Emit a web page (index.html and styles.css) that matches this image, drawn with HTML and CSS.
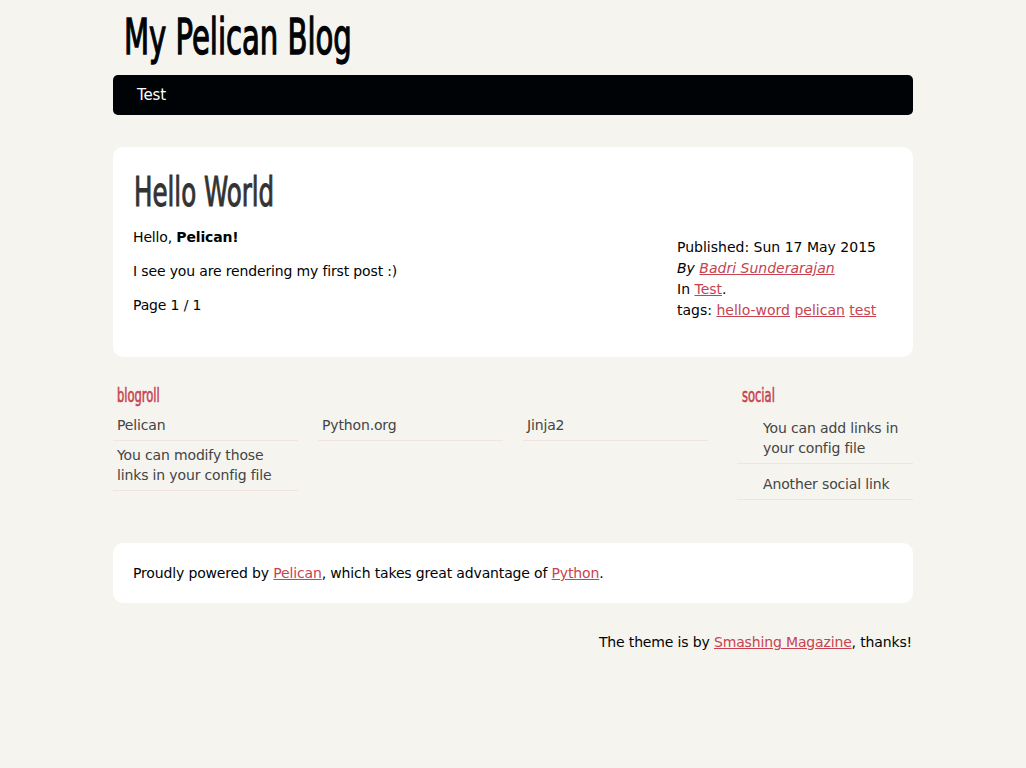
FILE: index.html
```html
<!DOCTYPE html>
<html lang="en">
<head>
<meta charset="utf-8">
<title>My Pelican Blog</title>
<link rel="stylesheet" href="styles.css">
</head>
<body>
<div class="page">
  <header class="banner">
    <h1 class="site-title">My Pelican Blog</h1>
    <nav class="menu"><a href="#">Test</a></nav>
  </header>

  <section class="card article">
    <h2 class="entry-title">Hello World</h2>
    <div class="entry">
      <div class="entry-content">
        <p>Hello, <strong>Pelican!</strong></p>
        <p>I see you are rendering my first post :)</p>
        <p>Page 1 / 1</p>
      </div>
      <footer class="post-info">
        <div>Published: Sun 17 May 2015</div>
        <div><em>By</em> <a href="#" class="au">Badri Sunderarajan</a></div>
        <div>In <a href="#">Test</a>.</div>
        <div>tags: <a href="#">hello-word</a> <a href="#">pelican</a> <a href="#">test</a></div>
      </footer>
    </div>
  </section>

  <section class="extras">
    <div class="blogroll">
      <h2 class="side-title">blogroll</h2>
      <ul class="roll">
        <li>Pelican</li>
        <li>Python.org</li>
        <li>Jinja2</li>
        <li>You can modify those links in your config file</li>
      </ul>
    </div>
    <div class="social">
      <h2 class="side-title">social</h2>
      <ul class="soc">
        <li>You can add links in your config file</li>
        <li>Another social link</li>
      </ul>
    </div>
  </section>

  <footer class="card contentinfo">
    Proudly powered by <a href="#">Pelican</a>, which takes great advantage of <a href="#">Python</a>.
  </footer>
  <p class="credits">The theme is by <a href="#">Smashing Magazine</a>, thanks!</p>
</div>
</body>
</html>
```
FILE: styles.css
```css
html, body {
  margin: 0;
  padding: 0;
}
body {
  background: #f5f4ef;
  color: #000305;
  font-family: "DejaVu Sans", sans-serif;
  font-size: 14px;
  line-height: 21px;
  letter-spacing: -0.15px;
}
a {
  color: #c74350;
}
.page {
  width: 800px;
  margin: 0 auto;
}
.banner {
  display: flex;
  flex-direction: column;
}
.site-title {
  margin: 0;
  height: 75px;
  padding-left: 11px;
  font-family: "DejaVu Sans Condensed", "DejaVu Sans", sans-serif;
  font-weight: normal;
  font-size: 49px;
  line-height: 75px;
  letter-spacing: 0;
  color: #000305;
  -webkit-text-stroke: 1.3px #000305;
  transform: scaleX(0.66);
  transform-origin: 11px 0;
}
.menu {
  height: 40px;
  background: #000305;
  border-radius: 5px;
  display: flex;
  align-items: center;
  padding-left: 24px;
}
.menu a {
  color: #fff;
  text-decoration: none;
  font-size: 15px;
  font-weight: normal;
}
.card {
  background: #fff;
  border-radius: 10px;
}
.article {
  margin-top: 32px;
  padding: 20px 20px 28px 20px;
}
.entry-title {
  margin: 0 0 10px 1px;
  font-family: "DejaVu Sans Condensed", "DejaVu Sans", sans-serif;
  font-weight: normal;
  font-size: 41px;
  line-height: 50px;
  letter-spacing: 0;
  color: #333;
  -webkit-text-stroke: 1px #333;
  transform: scaleX(0.665);
  transform-origin: 0 0;
}
.entry {
  display: flex;
  justify-content: space-between;
}
.entry-content p {
  margin: 0 0 13px 0;
}
.post-info {
  width: 216px;
  margin-top: 10px;
  letter-spacing: 0;
}
.post-info .au {
  font-style: italic;
}
.extras {
  display: flex;
  justify-content: space-between;
  margin-top: 26px;
}
.blogroll {
  width: 595px;
}
.social {
  width: 176px;
}
.side-title {
  margin: 0;
  padding-left: 4px;
  font-family: "DejaVu Sans Condensed", "DejaVu Sans", sans-serif;
  font-weight: normal;
  font-size: 20px;
  line-height: 24px;
  letter-spacing: 0;
  color: #c74350;
  -webkit-text-stroke: 0.6px #c74350;
  transform: scaleX(0.64);
  transform-origin: 4px 0;
}
.social .side-title {
  padding-left: 5px;
  transform-origin: 5px 0;
}
ul {
  list-style: none;
  margin: 0;
  padding: 0;
}
.roll {
  display: grid;
  grid-template-columns: repeat(3, 185px);
  column-gap: 20px;
  margin-top: 3px;
  align-items: start;
}
.roll li, .soc li {
  color: #444;
  line-height: 20px;
  border-bottom: 1px solid #f2e3e1;
}
.roll li {
  padding: 5px 4px 5px 4px;
}
.roll li:nth-child(n+4) {
  padding-top: 4px;
}
.soc {
  margin-top: 1px;
}
.soc li {
  padding: 10px 10px 5px 26px;
}
.contentinfo {
  margin-top: 43px;
  padding: 20px;
  line-height: 20px;
}
.credits {
  text-align: right;
  margin: 29px 1px 0 0;
  line-height: 20px;
}
```
